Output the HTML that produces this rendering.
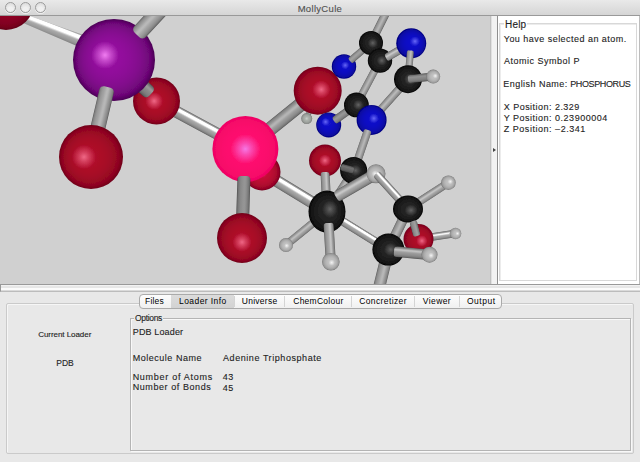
<!DOCTYPE html>
<html><head><meta charset="utf-8">
<style>
*{margin:0;padding:0;box-sizing:border-box}
html,body{width:640px;height:462px;overflow:hidden;background:#e8e8e8;font-family:"Liberation Sans",sans-serif;color:#1a1a1a}
.a{position:absolute;white-space:nowrap;-webkit-text-stroke:0.12px currentColor}
#title{position:absolute;left:0;top:0;width:640px;height:15px;background:linear-gradient(#e9e9e9,#d5d5d5);}
#tline{position:absolute;left:0;top:15px;width:640px;height:1px;background:#999}
.btn{position:absolute;top:2px;width:11px;height:11px;border-radius:50%;border:1.3px solid #9c9c9c;background:radial-gradient(circle at 50% 75%,#f0f0f0 30%,#d6d6d6);box-shadow:0 1px 0 rgba(255,255,255,0.6)}
#view{position:absolute;left:0;top:16px;width:490px;height:268px;background:#d0d0d0;overflow:hidden}
#vdiv{position:absolute;left:490px;top:16px;width:8px;height:268px;border-left:1px solid #c0c0c0;border-right:1px solid #8e8e8e;background:linear-gradient(to right,#e0e0e0 0,#e0e0e0 1px,#f2f2f2 1px)}
#rpanel{position:absolute;left:498px;top:16px;width:142px;height:268px;background:#fff;border-right:1px solid #bdbdbd}
#hdiv{position:absolute;left:0;top:284px;width:640px;height:8px;border-top:1px solid #999;border-bottom:1px solid #bcbcbc;border-left:1px solid #999;background:linear-gradient(#f2f2f2 0,#f2f2f2 1px,#e6e6e6 1px,#e6e6e6 3px,#fbfbfb 3px,#fbfbfb 5px,#dadada 5px)}
#tabpanel{position:absolute;left:6px;top:303px;width:628px;height:151px;border:1px solid #cacaca;border-radius:2px;background:#e8e8e8;box-shadow:1px 1px 0 #f6f6f6 inset}
#tabs{position:absolute;left:139px;top:294px;width:363px;height:15px;border:1px solid #aaaaaa;border-radius:4px;background:linear-gradient(#fdfdfd,#f0f0f0);overflow:hidden}
.tab{position:absolute;top:0;height:13px;font-size:9px;line-height:13px;color:#111}
.tsep{position:absolute;top:0;width:1px;height:11px;margin-top:1px;background:#d4d4d4}
</style></head><body>
<div id="title"></div>
<div id="tline"></div>
<div class="btn" style="left:5px"></div>
<div class="btn" style="left:20px"></div>
<div class="btn" style="left:35px"></div>

<div id="view">
<svg width="490" height="268" viewBox="0 16 490 268">

<filter id="soft" x="-5%" y="-5%" width="110%" height="110%"><feGaussianBlur stdDeviation="0.45"/></filter>
<g filter="url(#soft)">
<rect x="0" y="16" width="490" height="268" fill="#d0d0d0"/>
<linearGradient id="gb1" x1="0" y1="0" x2="0" y2="1"><stop offset="0.0" stop-color="#5b5b5b"/><stop offset="0.062" stop-color="#838383"/><stop offset="0.125" stop-color="#a8a8a8"/><stop offset="0.188" stop-color="#fdfdfd"/><stop offset="0.25" stop-color="#ffffff"/><stop offset="0.312" stop-color="#ffffff"/><stop offset="0.375" stop-color="#ffffff"/><stop offset="0.438" stop-color="#dddddd"/><stop offset="0.5" stop-color="#b6b6b6"/><stop offset="0.562" stop-color="#a7a7a7"/><stop offset="0.625" stop-color="#a2a2a2"/><stop offset="0.688" stop-color="#9d9d9d"/><stop offset="0.75" stop-color="#979797"/><stop offset="0.812" stop-color="#8f8f8f"/><stop offset="0.875" stop-color="#848484"/><stop offset="0.938" stop-color="#757575"/><stop offset="1.0" stop-color="#535353"/></linearGradient>
<radialGradient id="gh_Od2" cx="50%" cy="50%" r="50%"><stop offset="0" stop-color="#be3250" stop-opacity="0.3"/><stop offset="0.4" stop-color="#be3250" stop-opacity="0.165"/><stop offset="1" stop-color="#be3250" stop-opacity="0"/></radialGradient>
<radialGradient id="gm_Od2_0_0" cx="50%" cy="50%" r="50%" fx="50%" fy="50%"><stop offset="0.0" stop-color="#960626"/><stop offset="0.1" stop-color="#960626"/><stop offset="0.2" stop-color="#950626"/><stop offset="0.3" stop-color="#930625"/><stop offset="0.4" stop-color="#910525"/><stop offset="0.5" stop-color="#8f0524"/><stop offset="0.6" stop-color="#8b0523"/><stop offset="0.7" stop-color="#860421"/><stop offset="0.8" stop-color="#800420"/><stop offset="0.9" stop-color="#77031d"/><stop offset="1.0" stop-color="#5f0016"/></radialGradient>
<linearGradient id="gb2" x1="0" y1="0" x2="0" y2="1"><stop offset="0.0" stop-color="#5b5b5b"/><stop offset="0.062" stop-color="#838383"/><stop offset="0.125" stop-color="#a9a9a9"/><stop offset="0.188" stop-color="#ffffff"/><stop offset="0.25" stop-color="#ffffff"/><stop offset="0.312" stop-color="#ffffff"/><stop offset="0.375" stop-color="#ffffff"/><stop offset="0.438" stop-color="#dedede"/><stop offset="0.5" stop-color="#b6b6b6"/><stop offset="0.562" stop-color="#a7a7a7"/><stop offset="0.625" stop-color="#a2a2a2"/><stop offset="0.688" stop-color="#9d9d9d"/><stop offset="0.75" stop-color="#979797"/><stop offset="0.812" stop-color="#8f8f8f"/><stop offset="0.875" stop-color="#858585"/><stop offset="0.938" stop-color="#757575"/><stop offset="1.0" stop-color="#535353"/></linearGradient>
<radialGradient id="gh_O" cx="50%" cy="50%" r="50%"><stop offset="0" stop-color="#fa7896" stop-opacity="0.85"/><stop offset="0.4" stop-color="#fa7896" stop-opacity="0.468"/><stop offset="1" stop-color="#fa7896" stop-opacity="0"/></radialGradient>
<radialGradient id="gm_O_m10_0" cx="50%" cy="50%" r="50%" fx="46%" fy="50%"><stop offset="0.0" stop-color="#b20c2a"/><stop offset="0.1" stop-color="#b20c2a"/><stop offset="0.2" stop-color="#b10c2a"/><stop offset="0.3" stop-color="#af0b29"/><stop offset="0.4" stop-color="#ac0b28"/><stop offset="0.5" stop-color="#a90a28"/><stop offset="0.6" stop-color="#a50a26"/><stop offset="0.7" stop-color="#9f0925"/><stop offset="0.8" stop-color="#980723"/><stop offset="0.9" stop-color="#8d0520"/><stop offset="1.0" stop-color="#700018"/></radialGradient>
<linearGradient id="gb3" x1="0" y1="0" x2="0" y2="1"><stop offset="0.0" stop-color="#484848"/><stop offset="0.062" stop-color="#686868"/><stop offset="0.125" stop-color="#767676"/><stop offset="0.188" stop-color="#858585"/><stop offset="0.25" stop-color="#949494"/><stop offset="0.312" stop-color="#999999"/><stop offset="0.375" stop-color="#949494"/><stop offset="0.438" stop-color="#8d8d8d"/><stop offset="0.5" stop-color="#898989"/><stop offset="0.562" stop-color="#868686"/><stop offset="0.625" stop-color="#838383"/><stop offset="0.688" stop-color="#808080"/><stop offset="0.75" stop-color="#7b7b7b"/><stop offset="0.812" stop-color="#757575"/><stop offset="0.875" stop-color="#6c6c6c"/><stop offset="0.938" stop-color="#606060"/><stop offset="1.0" stop-color="#444444"/></linearGradient>
<radialGradient id="gh_Pu" cx="50%" cy="50%" r="50%"><stop offset="0" stop-color="#f582f5" stop-opacity="0.95"/><stop offset="0.4" stop-color="#f582f5" stop-opacity="0.522"/><stop offset="1" stop-color="#f582f5" stop-opacity="0"/></radialGradient>
<radialGradient id="gm_Pu_m22_m12" cx="50%" cy="50%" r="50%" fx="41%" fy="45%"><stop offset="0.0" stop-color="#960ea0"/><stop offset="0.1" stop-color="#960ea0"/><stop offset="0.2" stop-color="#940e9e"/><stop offset="0.3" stop-color="#930d9d"/><stop offset="0.4" stop-color="#900d9a"/><stop offset="0.5" stop-color="#8c0c96"/><stop offset="0.6" stop-color="#870b91"/><stop offset="0.7" stop-color="#810a8b"/><stop offset="0.8" stop-color="#780882"/><stop offset="0.9" stop-color="#6c0676"/><stop offset="1.0" stop-color="#4b0055"/></radialGradient>
<linearGradient id="gb4" x1="0" y1="0" x2="0" y2="1"><stop offset="0.0" stop-color="#595959"/><stop offset="0.062" stop-color="#808080"/><stop offset="0.125" stop-color="#8e8e8e"/><stop offset="0.188" stop-color="#989898"/><stop offset="0.25" stop-color="#a0a0a0"/><stop offset="0.312" stop-color="#aaaaaa"/><stop offset="0.375" stop-color="#b4b4b4"/><stop offset="0.438" stop-color="#b9b9b9"/><stop offset="0.5" stop-color="#b6b6b6"/><stop offset="0.562" stop-color="#adadad"/><stop offset="0.625" stop-color="#a5a5a5"/><stop offset="0.688" stop-color="#9f9f9f"/><stop offset="0.75" stop-color="#989898"/><stop offset="0.812" stop-color="#909090"/><stop offset="0.875" stop-color="#868686"/><stop offset="0.938" stop-color="#767676"/><stop offset="1.0" stop-color="#535353"/></linearGradient>
<linearGradient id="gb5" x1="0" y1="0" x2="0" y2="1"><stop offset="0.0" stop-color="#535353"/><stop offset="0.062" stop-color="#7a7a7a"/><stop offset="0.125" stop-color="#898989"/><stop offset="0.188" stop-color="#939393"/><stop offset="0.25" stop-color="#9c9c9c"/><stop offset="0.312" stop-color="#a7a7a7"/><stop offset="0.375" stop-color="#b2b2b2"/><stop offset="0.438" stop-color="#b8b8b8"/><stop offset="0.5" stop-color="#b6b6b6"/><stop offset="0.562" stop-color="#afafaf"/><stop offset="0.625" stop-color="#a7a7a7"/><stop offset="0.688" stop-color="#a1a1a1"/><stop offset="0.75" stop-color="#9c9c9c"/><stop offset="0.812" stop-color="#959595"/><stop offset="0.875" stop-color="#8b8b8b"/><stop offset="0.938" stop-color="#7d7d7d"/><stop offset="1.0" stop-color="#555555"/></linearGradient>
<radialGradient id="gm_O_m22_0" cx="50%" cy="50%" r="50%" fx="41%" fy="50%"><stop offset="0.0" stop-color="#b20c2a"/><stop offset="0.1" stop-color="#b20c2a"/><stop offset="0.2" stop-color="#b10c2a"/><stop offset="0.3" stop-color="#af0b29"/><stop offset="0.4" stop-color="#ac0b28"/><stop offset="0.5" stop-color="#a90a28"/><stop offset="0.6" stop-color="#a50a26"/><stop offset="0.7" stop-color="#9f0925"/><stop offset="0.8" stop-color="#980723"/><stop offset="0.9" stop-color="#8d0520"/><stop offset="1.0" stop-color="#700018"/></radialGradient>
<linearGradient id="gb6" x1="0" y1="0" x2="0" y2="1"><stop offset="0.0" stop-color="#555555"/><stop offset="0.062" stop-color="#7a7a7a"/><stop offset="0.125" stop-color="#878787"/><stop offset="0.188" stop-color="#919191"/><stop offset="0.25" stop-color="#9b9b9b"/><stop offset="0.312" stop-color="#a9a9a9"/><stop offset="0.375" stop-color="#b3b3b3"/><stop offset="0.438" stop-color="#b5b5b5"/><stop offset="0.5" stop-color="#adadad"/><stop offset="0.562" stop-color="#a3a3a3"/><stop offset="0.625" stop-color="#9b9b9b"/><stop offset="0.688" stop-color="#959595"/><stop offset="0.75" stop-color="#909090"/><stop offset="0.812" stop-color="#888888"/><stop offset="0.875" stop-color="#7e7e7e"/><stop offset="0.938" stop-color="#6f6f6f"/><stop offset="1.0" stop-color="#4f4f4f"/></linearGradient>
<linearGradient id="gb7" x1="0" y1="0" x2="0" y2="1"><stop offset="0.0" stop-color="#5a5a5a"/><stop offset="0.062" stop-color="#838383"/><stop offset="0.125" stop-color="#a8a8a8"/><stop offset="0.188" stop-color="#ffffff"/><stop offset="0.25" stop-color="#ffffff"/><stop offset="0.312" stop-color="#ffffff"/><stop offset="0.375" stop-color="#ffffff"/><stop offset="0.438" stop-color="#dedede"/><stop offset="0.5" stop-color="#b6b6b6"/><stop offset="0.562" stop-color="#a7a7a7"/><stop offset="0.625" stop-color="#a2a2a2"/><stop offset="0.688" stop-color="#9d9d9d"/><stop offset="0.75" stop-color="#979797"/><stop offset="0.812" stop-color="#8f8f8f"/><stop offset="0.875" stop-color="#858585"/><stop offset="0.938" stop-color="#757575"/><stop offset="1.0" stop-color="#535353"/></linearGradient>
<radialGradient id="gh_Od" cx="50%" cy="50%" r="50%"><stop offset="0" stop-color="#eb5f7d" stop-opacity="0.5"/><stop offset="0.4" stop-color="#eb5f7d" stop-opacity="0.275"/><stop offset="1" stop-color="#eb5f7d" stop-opacity="0"/></radialGradient>
<radialGradient id="gm_Od_0_0" cx="50%" cy="50%" r="50%" fx="50%" fy="50%"><stop offset="0.0" stop-color="#c80c37"/><stop offset="0.1" stop-color="#c80c37"/><stop offset="0.2" stop-color="#c60c36"/><stop offset="0.3" stop-color="#c40b36"/><stop offset="0.4" stop-color="#c10b35"/><stop offset="0.5" stop-color="#bd0a33"/><stop offset="0.6" stop-color="#b70a32"/><stop offset="0.7" stop-color="#b0092f"/><stop offset="0.8" stop-color="#a6072c"/><stop offset="0.9" stop-color="#980528"/><stop offset="1.0" stop-color="#73001c"/></radialGradient>
<radialGradient id="gh_P" cx="50%" cy="50%" r="50%"><stop offset="0" stop-color="#f57deb" stop-opacity="0.95"/><stop offset="0.4" stop-color="#f57deb" stop-opacity="0.522"/><stop offset="1" stop-color="#f57deb" stop-opacity="0"/></radialGradient>
<radialGradient id="gm_P_0_0" cx="50%" cy="50%" r="50%" fx="50%" fy="50%"><stop offset="0.0" stop-color="#ff1070"/><stop offset="0.1" stop-color="#ff1070"/><stop offset="0.2" stop-color="#ff1070"/><stop offset="0.3" stop-color="#fe0f6f"/><stop offset="0.4" stop-color="#fe0f6f"/><stop offset="0.5" stop-color="#fd0e6e"/><stop offset="0.6" stop-color="#fc0d6d"/><stop offset="0.7" stop-color="#fa0b6c"/><stop offset="0.8" stop-color="#f80a6a"/><stop offset="0.9" stop-color="#f50768"/><stop offset="1.0" stop-color="#ee0062"/></radialGradient>
<linearGradient id="gb8" x1="0" y1="0" x2="0" y2="1"><stop offset="0.0" stop-color="#484848"/><stop offset="0.062" stop-color="#6a6a6a"/><stop offset="0.125" stop-color="#777777"/><stop offset="0.188" stop-color="#808080"/><stop offset="0.25" stop-color="#888888"/><stop offset="0.312" stop-color="#8f8f8f"/><stop offset="0.375" stop-color="#949494"/><stop offset="0.438" stop-color="#959595"/><stop offset="0.5" stop-color="#949494"/><stop offset="0.562" stop-color="#919191"/><stop offset="0.625" stop-color="#8e8e8e"/><stop offset="0.688" stop-color="#8b8b8b"/><stop offset="0.75" stop-color="#868686"/><stop offset="0.812" stop-color="#808080"/><stop offset="0.875" stop-color="#787878"/><stop offset="0.938" stop-color="#6b6b6b"/><stop offset="1.0" stop-color="#484848"/></linearGradient>
<radialGradient id="gm_O_0_17" cx="50%" cy="50%" r="50%" fx="50%" fy="57%"><stop offset="0.0" stop-color="#b20c2a"/><stop offset="0.1" stop-color="#b20c2a"/><stop offset="0.2" stop-color="#b10c2a"/><stop offset="0.3" stop-color="#af0b29"/><stop offset="0.4" stop-color="#ac0b28"/><stop offset="0.5" stop-color="#a90a28"/><stop offset="0.6" stop-color="#a50a26"/><stop offset="0.7" stop-color="#9f0925"/><stop offset="0.8" stop-color="#980723"/><stop offset="0.9" stop-color="#8d0520"/><stop offset="1.0" stop-color="#700018"/></radialGradient>
<linearGradient id="gb9" x1="0" y1="0" x2="0" y2="1"><stop offset="0.0" stop-color="#535353"/><stop offset="0.062" stop-color="#797979"/><stop offset="0.125" stop-color="#888888"/><stop offset="0.188" stop-color="#929292"/><stop offset="0.25" stop-color="#9a9a9a"/><stop offset="0.312" stop-color="#a3a3a3"/><stop offset="0.375" stop-color="#acacac"/><stop offset="0.438" stop-color="#b4b4b4"/><stop offset="0.5" stop-color="#b6b6b6"/><stop offset="0.562" stop-color="#b1b1b1"/><stop offset="0.625" stop-color="#a9a9a9"/><stop offset="0.688" stop-color="#a3a3a3"/><stop offset="0.75" stop-color="#9d9d9d"/><stop offset="0.812" stop-color="#969696"/><stop offset="0.875" stop-color="#8c8c8c"/><stop offset="0.938" stop-color="#7e7e7e"/><stop offset="1.0" stop-color="#565656"/></linearGradient>
<radialGradient id="gh_Hd" cx="50%" cy="50%" r="50%"><stop offset="0" stop-color="#dce1dc" stop-opacity="0.6"/><stop offset="0.4" stop-color="#dce1dc" stop-opacity="0.330"/><stop offset="1" stop-color="#dce1dc" stop-opacity="0"/></radialGradient>
<radialGradient id="gm_Hd_0_0" cx="50%" cy="50%" r="50%" fx="50%" fy="50%"><stop offset="0.0" stop-color="#afb4af"/><stop offset="0.1" stop-color="#afb4af"/><stop offset="0.2" stop-color="#aeb3ae"/><stop offset="0.3" stop-color="#acb1ac"/><stop offset="0.4" stop-color="#a9aea9"/><stop offset="0.5" stop-color="#a6aaa6"/><stop offset="0.6" stop-color="#a1a6a1"/><stop offset="0.7" stop-color="#9b9f9b"/><stop offset="0.8" stop-color="#939793"/><stop offset="0.9" stop-color="#888b88"/><stop offset="1.0" stop-color="#696c69"/></radialGradient>
<radialGradient id="gm_O_15_m5" cx="50%" cy="50%" r="50%" fx="56%" fy="48%"><stop offset="0.0" stop-color="#b20c2a"/><stop offset="0.1" stop-color="#b20c2a"/><stop offset="0.2" stop-color="#b10c2a"/><stop offset="0.3" stop-color="#af0b29"/><stop offset="0.4" stop-color="#ac0b28"/><stop offset="0.5" stop-color="#a90a28"/><stop offset="0.6" stop-color="#a50a26"/><stop offset="0.7" stop-color="#9f0925"/><stop offset="0.8" stop-color="#980723"/><stop offset="0.9" stop-color="#8d0520"/><stop offset="1.0" stop-color="#700018"/></radialGradient>
<linearGradient id="gb10" x1="0" y1="0" x2="0" y2="1"><stop offset="0.0" stop-color="#575757"/><stop offset="0.062" stop-color="#7f7f7f"/><stop offset="0.125" stop-color="#8d8d8d"/><stop offset="0.188" stop-color="#969696"/><stop offset="0.25" stop-color="#9d9d9d"/><stop offset="0.312" stop-color="#a4a4a4"/><stop offset="0.375" stop-color="#ababab"/><stop offset="0.438" stop-color="#b2b2b2"/><stop offset="0.5" stop-color="#b6b6b6"/><stop offset="0.562" stop-color="#b2b2b2"/><stop offset="0.625" stop-color="#aaaaaa"/><stop offset="0.688" stop-color="#a1a1a1"/><stop offset="0.75" stop-color="#9a9a9a"/><stop offset="0.812" stop-color="#929292"/><stop offset="0.875" stop-color="#878787"/><stop offset="0.938" stop-color="#787878"/><stop offset="1.0" stop-color="#535353"/></linearGradient>
<radialGradient id="gh_N" cx="50%" cy="50%" r="50%"><stop offset="0" stop-color="#7878ff" stop-opacity="0.85"/><stop offset="0.4" stop-color="#7878ff" stop-opacity="0.468"/><stop offset="1" stop-color="#7878ff" stop-opacity="0"/></radialGradient>
<radialGradient id="gm_N_10_m10" cx="50%" cy="50%" r="50%" fx="54%" fy="46%"><stop offset="0.0" stop-color="#1212cd"/><stop offset="0.1" stop-color="#1212cd"/><stop offset="0.2" stop-color="#1212cb"/><stop offset="0.3" stop-color="#1111c9"/><stop offset="0.4" stop-color="#1010c6"/><stop offset="0.5" stop-color="#1010c2"/><stop offset="0.6" stop-color="#0e0ebc"/><stop offset="0.7" stop-color="#0d0db5"/><stop offset="0.8" stop-color="#0b0bab"/><stop offset="0.9" stop-color="#08089d"/><stop offset="1.0" stop-color="#000078"/></radialGradient>
<linearGradient id="gb11" x1="0" y1="0" x2="0" y2="1"><stop offset="0.0" stop-color="#525252"/><stop offset="0.062" stop-color="#767676"/><stop offset="0.125" stop-color="#838383"/><stop offset="0.188" stop-color="#8c8c8c"/><stop offset="0.25" stop-color="#939393"/><stop offset="0.312" stop-color="#999999"/><stop offset="0.375" stop-color="#9e9e9e"/><stop offset="0.438" stop-color="#a0a0a0"/><stop offset="0.5" stop-color="#9e9e9e"/><stop offset="0.562" stop-color="#9a9a9a"/><stop offset="0.625" stop-color="#959595"/><stop offset="0.688" stop-color="#919191"/><stop offset="0.75" stop-color="#8c8c8c"/><stop offset="0.812" stop-color="#848484"/><stop offset="0.875" stop-color="#7b7b7b"/><stop offset="0.938" stop-color="#6c6c6c"/><stop offset="1.0" stop-color="#4c4c4c"/></linearGradient>
<radialGradient id="gh_C" cx="50%" cy="50%" r="50%"><stop offset="0" stop-color="#737373" stop-opacity="0.8"/><stop offset="0.4" stop-color="#737373" stop-opacity="0.440"/><stop offset="1" stop-color="#737373" stop-opacity="0"/></radialGradient>
<radialGradient id="gm_C_15_0" cx="50%" cy="50%" r="50%" fx="56%" fy="50%"><stop offset="0.0" stop-color="#262626"/><stop offset="0.1" stop-color="#262626"/><stop offset="0.2" stop-color="#252525"/><stop offset="0.3" stop-color="#242424"/><stop offset="0.4" stop-color="#232323"/><stop offset="0.5" stop-color="#212121"/><stop offset="0.6" stop-color="#1e1e1e"/><stop offset="0.7" stop-color="#1b1b1b"/><stop offset="0.8" stop-color="#171717"/><stop offset="0.9" stop-color="#111111"/><stop offset="1.0" stop-color="#000000"/></radialGradient>
<linearGradient id="gb12" x1="0" y1="0" x2="0" y2="1"><stop offset="0.0" stop-color="#535353"/><stop offset="0.062" stop-color="#787878"/><stop offset="0.125" stop-color="#878787"/><stop offset="0.188" stop-color="#929292"/><stop offset="0.25" stop-color="#999999"/><stop offset="0.312" stop-color="#a1a1a1"/><stop offset="0.375" stop-color="#a9a9a9"/><stop offset="0.438" stop-color="#b2b2b2"/><stop offset="0.5" stop-color="#b6b6b6"/><stop offset="0.562" stop-color="#b3b3b3"/><stop offset="0.625" stop-color="#acacac"/><stop offset="0.688" stop-color="#a4a4a4"/><stop offset="0.75" stop-color="#9d9d9d"/><stop offset="0.812" stop-color="#969696"/><stop offset="0.875" stop-color="#8d8d8d"/><stop offset="0.938" stop-color="#7f7f7f"/><stop offset="1.0" stop-color="#575757"/></linearGradient>
<linearGradient id="gb13" x1="0" y1="0" x2="0" y2="1"><stop offset="0.0" stop-color="#5a5a5a"/><stop offset="0.062" stop-color="#828282"/><stop offset="0.125" stop-color="#909090"/><stop offset="0.188" stop-color="#9c9c9c"/><stop offset="0.25" stop-color="#acacac"/><stop offset="0.312" stop-color="#bebebe"/><stop offset="0.375" stop-color="#c7c7c7"/><stop offset="0.438" stop-color="#c3c3c3"/><stop offset="0.5" stop-color="#b6b6b6"/><stop offset="0.562" stop-color="#aaaaaa"/><stop offset="0.625" stop-color="#a3a3a3"/><stop offset="0.688" stop-color="#9e9e9e"/><stop offset="0.75" stop-color="#979797"/><stop offset="0.812" stop-color="#8f8f8f"/><stop offset="0.875" stop-color="#858585"/><stop offset="0.938" stop-color="#757575"/><stop offset="1.0" stop-color="#535353"/></linearGradient>
<radialGradient id="gm_N_25_m13" cx="50%" cy="50%" r="50%" fx="60%" fy="45%"><stop offset="0.0" stop-color="#1212cd"/><stop offset="0.1" stop-color="#1212cd"/><stop offset="0.2" stop-color="#1212cb"/><stop offset="0.3" stop-color="#1111c9"/><stop offset="0.4" stop-color="#1010c6"/><stop offset="0.5" stop-color="#1010c2"/><stop offset="0.6" stop-color="#0e0ebc"/><stop offset="0.7" stop-color="#0d0db5"/><stop offset="0.8" stop-color="#0b0bab"/><stop offset="0.9" stop-color="#08089d"/><stop offset="1.0" stop-color="#000078"/></radialGradient>
<linearGradient id="gb14" x1="0" y1="0" x2="0" y2="1"><stop offset="0.0" stop-color="#535353"/><stop offset="0.062" stop-color="#777777"/><stop offset="0.125" stop-color="#868686"/><stop offset="0.188" stop-color="#909090"/><stop offset="0.25" stop-color="#989898"/><stop offset="0.312" stop-color="#9f9f9f"/><stop offset="0.375" stop-color="#a5a5a5"/><stop offset="0.438" stop-color="#aeaeae"/><stop offset="0.5" stop-color="#b6b6b6"/><stop offset="0.562" stop-color="#b9b9b9"/><stop offset="0.625" stop-color="#b3b3b3"/><stop offset="0.688" stop-color="#aaaaaa"/><stop offset="0.75" stop-color="#a0a0a0"/><stop offset="0.812" stop-color="#989898"/><stop offset="0.875" stop-color="#8e8e8e"/><stop offset="0.938" stop-color="#808080"/><stop offset="1.0" stop-color="#595959"/></linearGradient>
<linearGradient id="gb15" x1="0" y1="0" x2="0" y2="1"><stop offset="0.0" stop-color="#535353"/><stop offset="0.062" stop-color="#7b7b7b"/><stop offset="0.125" stop-color="#8a8a8a"/><stop offset="0.188" stop-color="#949494"/><stop offset="0.25" stop-color="#a0a0a0"/><stop offset="0.312" stop-color="#aeaeae"/><stop offset="0.375" stop-color="#bababa"/><stop offset="0.438" stop-color="#bcbcbc"/><stop offset="0.5" stop-color="#b6b6b6"/><stop offset="0.562" stop-color="#adadad"/><stop offset="0.625" stop-color="#a6a6a6"/><stop offset="0.688" stop-color="#a1a1a1"/><stop offset="0.75" stop-color="#9b9b9b"/><stop offset="0.812" stop-color="#949494"/><stop offset="0.875" stop-color="#8b8b8b"/><stop offset="0.938" stop-color="#7c7c7c"/><stop offset="1.0" stop-color="#545454"/></linearGradient>
<linearGradient id="gb16" x1="0" y1="0" x2="0" y2="1"><stop offset="0.0" stop-color="#4a4a4a"/><stop offset="0.062" stop-color="#6a6a6a"/><stop offset="0.125" stop-color="#767676"/><stop offset="0.188" stop-color="#808080"/><stop offset="0.25" stop-color="#8a8a8a"/><stop offset="0.312" stop-color="#919191"/><stop offset="0.375" stop-color="#909090"/><stop offset="0.438" stop-color="#8c8c8c"/><stop offset="0.5" stop-color="#898989"/><stop offset="0.562" stop-color="#868686"/><stop offset="0.625" stop-color="#838383"/><stop offset="0.688" stop-color="#7f7f7f"/><stop offset="0.75" stop-color="#7a7a7a"/><stop offset="0.812" stop-color="#747474"/><stop offset="0.875" stop-color="#6b6b6b"/><stop offset="0.938" stop-color="#5e5e5e"/><stop offset="1.0" stop-color="#444444"/></linearGradient>
<radialGradient id="gh_H" cx="50%" cy="50%" r="50%"><stop offset="0" stop-color="#fafafa" stop-opacity="0.9"/><stop offset="0.4" stop-color="#fafafa" stop-opacity="0.495"/><stop offset="1" stop-color="#fafafa" stop-opacity="0"/></radialGradient>
<radialGradient id="gm_H_30_m10" cx="50%" cy="50%" r="50%" fx="62%" fy="46%"><stop offset="0.0" stop-color="#c4c4c4"/><stop offset="0.1" stop-color="#c4c4c4"/><stop offset="0.2" stop-color="#c2c2c2"/><stop offset="0.3" stop-color="#c0c0c0"/><stop offset="0.4" stop-color="#bdbdbd"/><stop offset="0.5" stop-color="#b9b9b9"/><stop offset="0.6" stop-color="#b3b3b3"/><stop offset="0.7" stop-color="#acacac"/><stop offset="0.8" stop-color="#a2a2a2"/><stop offset="0.9" stop-color="#959595"/><stop offset="1.0" stop-color="#707070"/></radialGradient>
<radialGradient id="gm_N_m25_m25" cx="50%" cy="50%" r="50%" fx="40%" fy="40%"><stop offset="0.0" stop-color="#1212cd"/><stop offset="0.1" stop-color="#1212cd"/><stop offset="0.2" stop-color="#1212cb"/><stop offset="0.3" stop-color="#1111c9"/><stop offset="0.4" stop-color="#1010c6"/><stop offset="0.5" stop-color="#1010c2"/><stop offset="0.6" stop-color="#0e0ebc"/><stop offset="0.7" stop-color="#0d0db5"/><stop offset="0.8" stop-color="#0b0bab"/><stop offset="0.9" stop-color="#08089d"/><stop offset="1.0" stop-color="#000078"/></radialGradient>
<linearGradient id="gb17" x1="0" y1="0" x2="0" y2="1"><stop offset="0.0" stop-color="#484848"/><stop offset="0.062" stop-color="#666666"/><stop offset="0.125" stop-color="#737373"/><stop offset="0.188" stop-color="#7c7c7c"/><stop offset="0.25" stop-color="#838383"/><stop offset="0.312" stop-color="#888888"/><stop offset="0.375" stop-color="#8c8c8c"/><stop offset="0.438" stop-color="#909090"/><stop offset="0.5" stop-color="#949494"/><stop offset="0.562" stop-color="#969696"/><stop offset="0.625" stop-color="#969696"/><stop offset="0.688" stop-color="#919191"/><stop offset="0.75" stop-color="#8b8b8b"/><stop offset="0.812" stop-color="#848484"/><stop offset="0.875" stop-color="#7c7c7c"/><stop offset="0.938" stop-color="#707070"/><stop offset="1.0" stop-color="#4e4e4e"/></linearGradient>
<linearGradient id="gb18" x1="0" y1="0" x2="0" y2="1"><stop offset="0.0" stop-color="#595959"/><stop offset="0.062" stop-color="#818181"/><stop offset="0.125" stop-color="#a0a0a0"/><stop offset="0.188" stop-color="#e5e5e5"/><stop offset="0.25" stop-color="#ffffff"/><stop offset="0.312" stop-color="#ffffff"/><stop offset="0.375" stop-color="#ffffff"/><stop offset="0.438" stop-color="#dadada"/><stop offset="0.5" stop-color="#b6b6b6"/><stop offset="0.562" stop-color="#a8a8a8"/><stop offset="0.625" stop-color="#a2a2a2"/><stop offset="0.688" stop-color="#9e9e9e"/><stop offset="0.75" stop-color="#989898"/><stop offset="0.812" stop-color="#909090"/><stop offset="0.875" stop-color="#868686"/><stop offset="0.938" stop-color="#767676"/><stop offset="1.0" stop-color="#535353"/></linearGradient>
<radialGradient id="gm_N_15_m10" cx="50%" cy="50%" r="50%" fx="56%" fy="46%"><stop offset="0.0" stop-color="#1212cd"/><stop offset="0.1" stop-color="#1212cd"/><stop offset="0.2" stop-color="#1212cb"/><stop offset="0.3" stop-color="#1111c9"/><stop offset="0.4" stop-color="#1010c6"/><stop offset="0.5" stop-color="#1010c2"/><stop offset="0.6" stop-color="#0e0ebc"/><stop offset="0.7" stop-color="#0d0db5"/><stop offset="0.8" stop-color="#0b0bab"/><stop offset="0.9" stop-color="#08089d"/><stop offset="1.0" stop-color="#000078"/></radialGradient>
<linearGradient id="gb19" x1="0" y1="0" x2="0" y2="1"><stop offset="0.0" stop-color="#535353"/><stop offset="0.062" stop-color="#797979"/><stop offset="0.125" stop-color="#888888"/><stop offset="0.188" stop-color="#929292"/><stop offset="0.25" stop-color="#9b9b9b"/><stop offset="0.312" stop-color="#a4a4a4"/><stop offset="0.375" stop-color="#aeaeae"/><stop offset="0.438" stop-color="#b5b5b5"/><stop offset="0.5" stop-color="#b6b6b6"/><stop offset="0.562" stop-color="#b0b0b0"/><stop offset="0.625" stop-color="#a8a8a8"/><stop offset="0.688" stop-color="#a2a2a2"/><stop offset="0.75" stop-color="#9c9c9c"/><stop offset="0.812" stop-color="#969696"/><stop offset="0.875" stop-color="#8c8c8c"/><stop offset="0.938" stop-color="#7e7e7e"/><stop offset="1.0" stop-color="#565656"/></linearGradient>
<linearGradient id="gb20" x1="0" y1="0" x2="0" y2="1"><stop offset="0.0" stop-color="#585858"/><stop offset="0.062" stop-color="#7f7f7f"/><stop offset="0.125" stop-color="#8d8d8d"/><stop offset="0.188" stop-color="#979797"/><stop offset="0.25" stop-color="#9e9e9e"/><stop offset="0.312" stop-color="#a5a5a5"/><stop offset="0.375" stop-color="#aeaeae"/><stop offset="0.438" stop-color="#b5b5b5"/><stop offset="0.5" stop-color="#b6b6b6"/><stop offset="0.562" stop-color="#b0b0b0"/><stop offset="0.625" stop-color="#a8a8a8"/><stop offset="0.688" stop-color="#a0a0a0"/><stop offset="0.75" stop-color="#999999"/><stop offset="0.812" stop-color="#919191"/><stop offset="0.875" stop-color="#878787"/><stop offset="0.938" stop-color="#777777"/><stop offset="1.0" stop-color="#535353"/></linearGradient>
<linearGradient id="gb21" x1="0" y1="0" x2="0" y2="1"><stop offset="0.0" stop-color="#343434"/><stop offset="0.062" stop-color="#484848"/><stop offset="0.125" stop-color="#525252"/><stop offset="0.188" stop-color="#595959"/><stop offset="0.25" stop-color="#5e5e5e"/><stop offset="0.312" stop-color="#626262"/><stop offset="0.375" stop-color="#646464"/><stop offset="0.438" stop-color="#666666"/><stop offset="0.5" stop-color="#686868"/><stop offset="0.562" stop-color="#6b6b6b"/><stop offset="0.625" stop-color="#6e6e6e"/><stop offset="0.688" stop-color="#707070"/><stop offset="0.75" stop-color="#6d6d6d"/><stop offset="0.812" stop-color="#656565"/><stop offset="0.875" stop-color="#5b5b5b"/><stop offset="0.938" stop-color="#515151"/><stop offset="1.0" stop-color="#393939"/></linearGradient>
<radialGradient id="gm_O_0_0" cx="50%" cy="50%" r="50%" fx="50%" fy="50%"><stop offset="0.0" stop-color="#b20c2a"/><stop offset="0.1" stop-color="#b20c2a"/><stop offset="0.2" stop-color="#b10c2a"/><stop offset="0.3" stop-color="#af0b29"/><stop offset="0.4" stop-color="#ac0b28"/><stop offset="0.5" stop-color="#a90a28"/><stop offset="0.6" stop-color="#a50a26"/><stop offset="0.7" stop-color="#9f0925"/><stop offset="0.8" stop-color="#980723"/><stop offset="0.9" stop-color="#8d0520"/><stop offset="1.0" stop-color="#700018"/></radialGradient>
<linearGradient id="gb22" x1="0" y1="0" x2="0" y2="1"><stop offset="0.0" stop-color="#545454"/><stop offset="0.062" stop-color="#7c7c7c"/><stop offset="0.125" stop-color="#8b8b8b"/><stop offset="0.188" stop-color="#979797"/><stop offset="0.25" stop-color="#a7a7a7"/><stop offset="0.312" stop-color="#b9b9b9"/><stop offset="0.375" stop-color="#c4c4c4"/><stop offset="0.438" stop-color="#c1c1c1"/><stop offset="0.5" stop-color="#b6b6b6"/><stop offset="0.562" stop-color="#ababab"/><stop offset="0.625" stop-color="#a5a5a5"/><stop offset="0.688" stop-color="#a0a0a0"/><stop offset="0.75" stop-color="#9b9b9b"/><stop offset="0.812" stop-color="#949494"/><stop offset="0.875" stop-color="#8a8a8a"/><stop offset="0.938" stop-color="#7b7b7b"/><stop offset="1.0" stop-color="#535353"/></linearGradient>
<linearGradient id="gb23" x1="0" y1="0" x2="0" y2="1"><stop offset="0.0" stop-color="#535353"/><stop offset="0.062" stop-color="#767676"/><stop offset="0.125" stop-color="#858585"/><stop offset="0.188" stop-color="#909090"/><stop offset="0.25" stop-color="#989898"/><stop offset="0.312" stop-color="#9e9e9e"/><stop offset="0.375" stop-color="#a4a4a4"/><stop offset="0.438" stop-color="#acacac"/><stop offset="0.5" stop-color="#b6b6b6"/><stop offset="0.562" stop-color="#bdbdbd"/><stop offset="0.625" stop-color="#bcbcbc"/><stop offset="0.688" stop-color="#b1b1b1"/><stop offset="0.75" stop-color="#a4a4a4"/><stop offset="0.812" stop-color="#999999"/><stop offset="0.875" stop-color="#8f8f8f"/><stop offset="0.938" stop-color="#818181"/><stop offset="1.0" stop-color="#5a5a5a"/></linearGradient>
<linearGradient id="gb24" x1="0" y1="0" x2="0" y2="1"><stop offset="0.0" stop-color="#5a5a5a"/><stop offset="0.062" stop-color="#838383"/><stop offset="0.125" stop-color="#a8a8a8"/><stop offset="0.188" stop-color="#ffffff"/><stop offset="0.25" stop-color="#ffffff"/><stop offset="0.312" stop-color="#ffffff"/><stop offset="0.375" stop-color="#ffffff"/><stop offset="0.438" stop-color="#dedede"/><stop offset="0.5" stop-color="#b6b6b6"/><stop offset="0.562" stop-color="#a7a7a7"/><stop offset="0.625" stop-color="#a2a2a2"/><stop offset="0.688" stop-color="#9d9d9d"/><stop offset="0.75" stop-color="#979797"/><stop offset="0.812" stop-color="#909090"/><stop offset="0.875" stop-color="#858585"/><stop offset="0.938" stop-color="#757575"/><stop offset="1.0" stop-color="#535353"/></linearGradient>
<radialGradient id="gm_C_16_m12" cx="50%" cy="50%" r="50%" fx="56%" fy="45%"><stop offset="0.0" stop-color="#262626"/><stop offset="0.1" stop-color="#262626"/><stop offset="0.2" stop-color="#252525"/><stop offset="0.3" stop-color="#242424"/><stop offset="0.4" stop-color="#232323"/><stop offset="0.5" stop-color="#212121"/><stop offset="0.6" stop-color="#1e1e1e"/><stop offset="0.7" stop-color="#1b1b1b"/><stop offset="0.8" stop-color="#171717"/><stop offset="0.9" stop-color="#111111"/><stop offset="1.0" stop-color="#000000"/></radialGradient>
<radialGradient id="gm_H_m10_0" cx="50%" cy="50%" r="50%" fx="46%" fy="50%"><stop offset="0.0" stop-color="#c4c4c4"/><stop offset="0.1" stop-color="#c4c4c4"/><stop offset="0.2" stop-color="#c2c2c2"/><stop offset="0.3" stop-color="#c0c0c0"/><stop offset="0.4" stop-color="#bdbdbd"/><stop offset="0.5" stop-color="#b9b9b9"/><stop offset="0.6" stop-color="#b3b3b3"/><stop offset="0.7" stop-color="#acacac"/><stop offset="0.8" stop-color="#a2a2a2"/><stop offset="0.9" stop-color="#959595"/><stop offset="1.0" stop-color="#707070"/></radialGradient>
<linearGradient id="gb25" x1="0" y1="0" x2="0" y2="1"><stop offset="0.0" stop-color="#595959"/><stop offset="0.062" stop-color="#818181"/><stop offset="0.125" stop-color="#9d9d9d"/><stop offset="0.188" stop-color="#dcdcdc"/><stop offset="0.25" stop-color="#ffffff"/><stop offset="0.312" stop-color="#ffffff"/><stop offset="0.375" stop-color="#ffffff"/><stop offset="0.438" stop-color="#d9d9d9"/><stop offset="0.5" stop-color="#b6b6b6"/><stop offset="0.562" stop-color="#a8a8a8"/><stop offset="0.625" stop-color="#a2a2a2"/><stop offset="0.688" stop-color="#9e9e9e"/><stop offset="0.75" stop-color="#989898"/><stop offset="0.812" stop-color="#909090"/><stop offset="0.875" stop-color="#868686"/><stop offset="0.938" stop-color="#767676"/><stop offset="1.0" stop-color="#535353"/></linearGradient>
<linearGradient id="gb26" x1="0" y1="0" x2="0" y2="1"><stop offset="0.0" stop-color="#545454"/><stop offset="0.062" stop-color="#7c7c7c"/><stop offset="0.125" stop-color="#8b8b8b"/><stop offset="0.188" stop-color="#979797"/><stop offset="0.25" stop-color="#a7a7a7"/><stop offset="0.312" stop-color="#bababa"/><stop offset="0.375" stop-color="#c4c4c4"/><stop offset="0.438" stop-color="#c1c1c1"/><stop offset="0.5" stop-color="#b6b6b6"/><stop offset="0.562" stop-color="#ababab"/><stop offset="0.625" stop-color="#a5a5a5"/><stop offset="0.688" stop-color="#a0a0a0"/><stop offset="0.75" stop-color="#9b9b9b"/><stop offset="0.812" stop-color="#949494"/><stop offset="0.875" stop-color="#8a8a8a"/><stop offset="0.938" stop-color="#7b7b7b"/><stop offset="1.0" stop-color="#535353"/></linearGradient>
<radialGradient id="gm_H_10_10" cx="50%" cy="50%" r="50%" fx="54%" fy="54%"><stop offset="0.0" stop-color="#c4c4c4"/><stop offset="0.1" stop-color="#c4c4c4"/><stop offset="0.2" stop-color="#c2c2c2"/><stop offset="0.3" stop-color="#c0c0c0"/><stop offset="0.4" stop-color="#bdbdbd"/><stop offset="0.5" stop-color="#b9b9b9"/><stop offset="0.6" stop-color="#b3b3b3"/><stop offset="0.7" stop-color="#acacac"/><stop offset="0.8" stop-color="#a2a2a2"/><stop offset="0.9" stop-color="#959595"/><stop offset="1.0" stop-color="#707070"/></radialGradient>
<linearGradient id="gb27" x1="0" y1="0" x2="0" y2="1"><stop offset="0.0" stop-color="#5a5a5a"/><stop offset="0.062" stop-color="#818181"/><stop offset="0.125" stop-color="#8f8f8f"/><stop offset="0.188" stop-color="#9b9b9b"/><stop offset="0.25" stop-color="#a9a9a9"/><stop offset="0.312" stop-color="#b9b9b9"/><stop offset="0.375" stop-color="#c3c3c3"/><stop offset="0.438" stop-color="#c1c1c1"/><stop offset="0.5" stop-color="#b6b6b6"/><stop offset="0.562" stop-color="#ababab"/><stop offset="0.625" stop-color="#a3a3a3"/><stop offset="0.688" stop-color="#9e9e9e"/><stop offset="0.75" stop-color="#989898"/><stop offset="0.812" stop-color="#909090"/><stop offset="0.875" stop-color="#858585"/><stop offset="0.938" stop-color="#757575"/><stop offset="1.0" stop-color="#535353"/></linearGradient>
<radialGradient id="gm_H_26_m15" cx="50%" cy="50%" r="50%" fx="60%" fy="44%"><stop offset="0.0" stop-color="#c4c4c4"/><stop offset="0.1" stop-color="#c4c4c4"/><stop offset="0.2" stop-color="#c2c2c2"/><stop offset="0.3" stop-color="#c0c0c0"/><stop offset="0.4" stop-color="#bdbdbd"/><stop offset="0.5" stop-color="#b9b9b9"/><stop offset="0.6" stop-color="#b3b3b3"/><stop offset="0.7" stop-color="#acacac"/><stop offset="0.8" stop-color="#a2a2a2"/><stop offset="0.9" stop-color="#959595"/><stop offset="1.0" stop-color="#707070"/></radialGradient>
<linearGradient id="gb28" x1="0" y1="0" x2="0" y2="1"><stop offset="0.0" stop-color="#5b5b5b"/><stop offset="0.062" stop-color="#838383"/><stop offset="0.125" stop-color="#959595"/><stop offset="0.188" stop-color="#b4b4b4"/><stop offset="0.25" stop-color="#e0e0e0"/><stop offset="0.312" stop-color="#fbfbfb"/><stop offset="0.375" stop-color="#f0f0f0"/><stop offset="0.438" stop-color="#d1d1d1"/><stop offset="0.5" stop-color="#b6b6b6"/><stop offset="0.562" stop-color="#a8a8a8"/><stop offset="0.625" stop-color="#a2a2a2"/><stop offset="0.688" stop-color="#9d9d9d"/><stop offset="0.75" stop-color="#979797"/><stop offset="0.812" stop-color="#8f8f8f"/><stop offset="0.875" stop-color="#848484"/><stop offset="0.938" stop-color="#747474"/><stop offset="1.0" stop-color="#535353"/></linearGradient>
<radialGradient id="gm_H_35_0" cx="50%" cy="50%" r="50%" fx="64%" fy="50%"><stop offset="0.0" stop-color="#c4c4c4"/><stop offset="0.1" stop-color="#c4c4c4"/><stop offset="0.2" stop-color="#c2c2c2"/><stop offset="0.3" stop-color="#c0c0c0"/><stop offset="0.4" stop-color="#bdbdbd"/><stop offset="0.5" stop-color="#b9b9b9"/><stop offset="0.6" stop-color="#b3b3b3"/><stop offset="0.7" stop-color="#acacac"/><stop offset="0.8" stop-color="#a2a2a2"/><stop offset="0.9" stop-color="#959595"/><stop offset="1.0" stop-color="#707070"/></radialGradient>
<linearGradient id="gb29" x1="0" y1="0" x2="0" y2="1"><stop offset="0.0" stop-color="#535353"/><stop offset="0.062" stop-color="#787878"/><stop offset="0.125" stop-color="#878787"/><stop offset="0.188" stop-color="#929292"/><stop offset="0.25" stop-color="#9a9a9a"/><stop offset="0.312" stop-color="#a1a1a1"/><stop offset="0.375" stop-color="#aaaaaa"/><stop offset="0.438" stop-color="#b3b3b3"/><stop offset="0.5" stop-color="#b6b6b6"/><stop offset="0.562" stop-color="#b2b2b2"/><stop offset="0.625" stop-color="#ababab"/><stop offset="0.688" stop-color="#a3a3a3"/><stop offset="0.75" stop-color="#9d9d9d"/><stop offset="0.812" stop-color="#969696"/><stop offset="0.875" stop-color="#8d8d8d"/><stop offset="0.938" stop-color="#7f7f7f"/><stop offset="1.0" stop-color="#575757"/></linearGradient>
<linearGradient id="gb30" x1="0" y1="0" x2="0" y2="1"><stop offset="0.0" stop-color="#535353"/><stop offset="0.062" stop-color="#7a7a7a"/><stop offset="0.125" stop-color="#898989"/><stop offset="0.188" stop-color="#939393"/><stop offset="0.25" stop-color="#9c9c9c"/><stop offset="0.312" stop-color="#a7a7a7"/><stop offset="0.375" stop-color="#b2b2b2"/><stop offset="0.438" stop-color="#b8b8b8"/><stop offset="0.5" stop-color="#b6b6b6"/><stop offset="0.562" stop-color="#afafaf"/><stop offset="0.625" stop-color="#a7a7a7"/><stop offset="0.688" stop-color="#a2a2a2"/><stop offset="0.75" stop-color="#9c9c9c"/><stop offset="0.812" stop-color="#959595"/><stop offset="0.875" stop-color="#8c8c8c"/><stop offset="0.938" stop-color="#7d7d7d"/><stop offset="1.0" stop-color="#555555"/></linearGradient>
<radialGradient id="gm_C_20_10" cx="50%" cy="50%" r="50%" fx="58%" fy="54%"><stop offset="0.0" stop-color="#262626"/><stop offset="0.1" stop-color="#262626"/><stop offset="0.2" stop-color="#252525"/><stop offset="0.3" stop-color="#242424"/><stop offset="0.4" stop-color="#232323"/><stop offset="0.5" stop-color="#212121"/><stop offset="0.6" stop-color="#1e1e1e"/><stop offset="0.7" stop-color="#1b1b1b"/><stop offset="0.8" stop-color="#171717"/><stop offset="0.9" stop-color="#111111"/><stop offset="1.0" stop-color="#000000"/></radialGradient>
<radialGradient id="gm_O_23_13" cx="50%" cy="50%" r="50%" fx="59%" fy="55%"><stop offset="0.0" stop-color="#b20c2a"/><stop offset="0.1" stop-color="#b20c2a"/><stop offset="0.2" stop-color="#b10c2a"/><stop offset="0.3" stop-color="#af0b29"/><stop offset="0.4" stop-color="#ac0b28"/><stop offset="0.5" stop-color="#a90a28"/><stop offset="0.6" stop-color="#a50a26"/><stop offset="0.7" stop-color="#9f0925"/><stop offset="0.8" stop-color="#980723"/><stop offset="0.9" stop-color="#8d0520"/><stop offset="1.0" stop-color="#700018"/></radialGradient>
<linearGradient id="gb31" x1="0" y1="0" x2="0" y2="1"><stop offset="0.0" stop-color="#4c4c4c"/><stop offset="0.062" stop-color="#707070"/><stop offset="0.125" stop-color="#7d7d7d"/><stop offset="0.188" stop-color="#888888"/><stop offset="0.25" stop-color="#939393"/><stop offset="0.312" stop-color="#9c9c9c"/><stop offset="0.375" stop-color="#9f9f9f"/><stop offset="0.438" stop-color="#9d9d9d"/><stop offset="0.5" stop-color="#989898"/><stop offset="0.562" stop-color="#949494"/><stop offset="0.625" stop-color="#929292"/><stop offset="0.688" stop-color="#8e8e8e"/><stop offset="0.75" stop-color="#898989"/><stop offset="0.812" stop-color="#838383"/><stop offset="0.875" stop-color="#7a7a7a"/><stop offset="0.938" stop-color="#6c6c6c"/><stop offset="1.0" stop-color="#4a4a4a"/></linearGradient>
<linearGradient id="gb32" x1="0" y1="0" x2="0" y2="1"><stop offset="0.0" stop-color="#545454"/><stop offset="0.062" stop-color="#787878"/><stop offset="0.125" stop-color="#898989"/><stop offset="0.188" stop-color="#a0a0a0"/><stop offset="0.25" stop-color="#b9b9b9"/><stop offset="0.312" stop-color="#c2c2c2"/><stop offset="0.375" stop-color="#b8b8b8"/><stop offset="0.438" stop-color="#a9a9a9"/><stop offset="0.5" stop-color="#9e9e9e"/><stop offset="0.562" stop-color="#989898"/><stop offset="0.625" stop-color="#949494"/><stop offset="0.688" stop-color="#909090"/><stop offset="0.75" stop-color="#8b8b8b"/><stop offset="0.812" stop-color="#838383"/><stop offset="0.875" stop-color="#797979"/><stop offset="0.938" stop-color="#6b6b6b"/><stop offset="1.0" stop-color="#4c4c4c"/></linearGradient>
<radialGradient id="gm_H_20_10" cx="50%" cy="50%" r="50%" fx="58%" fy="54%"><stop offset="0.0" stop-color="#c4c4c4"/><stop offset="0.1" stop-color="#c4c4c4"/><stop offset="0.2" stop-color="#c2c2c2"/><stop offset="0.3" stop-color="#c0c0c0"/><stop offset="0.4" stop-color="#bdbdbd"/><stop offset="0.5" stop-color="#b9b9b9"/><stop offset="0.6" stop-color="#b3b3b3"/><stop offset="0.7" stop-color="#acacac"/><stop offset="0.8" stop-color="#a2a2a2"/><stop offset="0.9" stop-color="#959595"/><stop offset="1.0" stop-color="#707070"/></radialGradient>
<polygon points="0,-3.5 122.4,-7.5 122.4,7.5 0,3.5" fill="url(#gb1)" transform="translate(0,9.3) rotate(21.32)"/>
<ellipse cx="6" cy="2" rx="28" ry="28" fill="url(#gm_Od2_0_0)"/><ellipse cx="6.0" cy="2.0" rx="9.8" ry="9.8" fill="url(#gh_Od2)"/>
<rect x="0" y="-6.0" width="101.0" height="12" rx="3.6" fill="url(#gb2)" transform="translate(156.5,101) rotate(28.37)"/>
<ellipse cx="156.5" cy="101" rx="23.5" ry="23.5" fill="url(#gm_O_m10_0)"/><ellipse cx="154.2" cy="101.0" rx="8.9" ry="8.9" fill="url(#gh_O)"/>
<rect x="0" y="-7.0" width="50.2" height="14" rx="4.2" fill="url(#gb3)" transform="translate(114,60) rotate(42.58)"/>
<ellipse cx="114" cy="60" rx="41" ry="41" fill="url(#gm_Pu_m22_m12)"/><ellipse cx="105.0" cy="55.1" rx="13.9" ry="13.9" fill="url(#gh_Pu)"/>
<rect x="0" y="-8.0" width="77.8" height="16" rx="4.8" fill="url(#gb4)" transform="translate(137,35) rotate(-47.08)"/>
<rect x="0" y="-7.5" width="71.9" height="15" rx="4.5" fill="url(#gb5)" transform="translate(107.5,87) rotate(103.26)"/>
<ellipse cx="91" cy="157" rx="32" ry="32" fill="url(#gm_O_m22_0)"/><ellipse cx="84.0" cy="157.0" rx="12.2" ry="12.2" fill="url(#gh_O)"/>
<rect x="0" y="-7.0" width="92.9" height="14" rx="4.2" fill="url(#gb6)" transform="translate(245.4,149) rotate(-38.88)"/>
<rect x="0" y="-6.0" width="76.1" height="12" rx="3.6" fill="url(#gb7)" transform="translate(262,172) rotate(31.35)"/>
<ellipse cx="262" cy="172" rx="18.5" ry="18.5" fill="url(#gm_Od_0_0)"/><ellipse cx="262.0" cy="172.0" rx="6.5" ry="6.5" fill="url(#gh_Od)"/>
<ellipse cx="245.4" cy="149" rx="33" ry="33" fill="url(#gm_P_0_0)"/><ellipse cx="245.4" cy="149.0" rx="14.8" ry="14.8" fill="url(#gh_P)"/>
<rect x="0" y="-6.5" width="62.0" height="13" rx="3.9" fill="url(#gb8)" transform="translate(244,176) rotate(91.85)"/>
<ellipse cx="242" cy="238" rx="25" ry="25" fill="url(#gm_O_0_17)"/><ellipse cx="242.0" cy="242.2" rx="9.5" ry="9.5" fill="url(#gh_O)"/>
<rect x="0" y="-2.5" width="30.0" height="5" rx="1.5" fill="url(#gb9)" transform="translate(317.7,90.7) rotate(111.52)"/>
<ellipse cx="306.7" cy="118.6" rx="5.5" ry="5.5" fill="url(#gm_Hd_0_0)"/><ellipse cx="306.7" cy="118.6" rx="1.9" ry="1.9" fill="url(#gh_Hd)"/>
<ellipse cx="317.7" cy="90.7" rx="24" ry="24" fill="url(#gm_O_15_m5)"/><ellipse cx="321.3" cy="89.5" rx="9.1" ry="9.1" fill="url(#gh_O)"/>
<rect x="0" y="-4.0" width="48.1" height="8" rx="2.4" fill="url(#gb10)" transform="translate(371,43) rotate(-63.43)"/>
<ellipse cx="344" cy="66.5" rx="12.2" ry="12.2" fill="url(#gm_N_10_m10)"/><ellipse cx="345.2" cy="65.3" rx="3.9" ry="3.9" fill="url(#gh_N)"/>
<rect x="0" y="-3.5" width="27.7" height="7" rx="2.1" fill="url(#gb11)" transform="translate(350,61) rotate(-40.60)"/>
<ellipse cx="371" cy="43" rx="12" ry="12" fill="url(#gm_C_15_0)"/><ellipse cx="372.8" cy="43.0" rx="5.0" ry="5.0" fill="url(#gh_C)"/>
<rect x="0" y="-3.75" width="50.2" height="7.5" rx="2.2" fill="url(#gb12)" transform="translate(380,60.6) rotate(118.05)"/>
<ellipse cx="380" cy="60.6" rx="12.2" ry="12.2" fill="url(#gm_C_15_0)"/><ellipse cx="381.8" cy="60.6" rx="5.1" ry="5.1" fill="url(#gh_C)"/>
<rect x="0" y="-4.0" width="29.2" height="8" rx="2.4" fill="url(#gb13)" transform="translate(386,58) rotate(-30.21)"/>
<ellipse cx="411.25" cy="43.3" rx="15" ry="15" fill="url(#gm_N_25_m13)"/><ellipse cx="415.0" cy="41.3" rx="4.8" ry="4.8" fill="url(#gh_N)"/>
<rect x="0" y="-4.0" width="54.6" height="8" rx="2.4" fill="url(#gb14)" transform="translate(408,79.2) rotate(131.81)"/>
<rect x="0" y="-3.5" width="28.8" height="7" rx="2.1" fill="url(#gb15)" transform="translate(410.5,50.5) rotate(94.98)"/>
<ellipse cx="408" cy="79.2" rx="14" ry="14" fill="url(#gm_C_15_0)"/><ellipse cx="410.1" cy="79.2" rx="5.9" ry="5.9" fill="url(#gh_C)"/>
<rect x="0" y="-4.0" width="25.3" height="8" rx="2.4" fill="url(#gb16)" transform="translate(408,79.2) rotate(-5.89)"/>
<ellipse cx="433.2" cy="76.6" rx="7" ry="7" fill="url(#gm_H_30_m10)"/><ellipse cx="435.3" cy="75.9" rx="2.5" ry="2.5" fill="url(#gh_H)"/>
<ellipse cx="328.7" cy="125" rx="12.5" ry="12.5" fill="url(#gm_N_m25_m25)"/><ellipse cx="325.6" cy="121.9" rx="4.0" ry="4.0" fill="url(#gh_N)"/>
<rect x="0" y="-4.0" width="27.6" height="8" rx="2.4" fill="url(#gb17)" transform="translate(356.4,104.9) rotate(144.29)"/>
<rect x="0" y="-4.0" width="21.4" height="8" rx="2.4" fill="url(#gb18)" transform="translate(356.4,104.9) rotate(44.62)"/>
<ellipse cx="356.4" cy="104.9" rx="12.4" ry="12.4" fill="url(#gm_C_15_0)"/><ellipse cx="358.3" cy="104.9" rx="5.2" ry="5.2" fill="url(#gh_C)"/>
<ellipse cx="371.6" cy="119.9" rx="15" ry="15" fill="url(#gm_N_15_m10)"/><ellipse cx="373.9" cy="118.4" rx="4.8" ry="4.8" fill="url(#gh_N)"/>
<rect x="0" y="-4.0" width="33.8" height="8" rx="2.4" fill="url(#gb19)" transform="translate(368,130) rotate(108.97)"/>
<rect x="0" y="-4.0" width="49.0" height="8" rx="2.4" fill="url(#gb20)" transform="translate(327,211.6) rotate(-57.15)"/>
<ellipse cx="353.6" cy="170.4" rx="13.5" ry="13.5" fill="url(#gm_C_15_0)"/><ellipse cx="355.6" cy="170.4" rx="5.7" ry="5.7" fill="url(#gh_C)"/>
<rect x="0" y="-3.5" width="13.1" height="7" rx="2.1" fill="url(#gb21)" transform="translate(353.6,170.4) rotate(-164.90)"/>
<ellipse cx="325" cy="160.5" rx="16" ry="16" fill="url(#gm_O_0_0)"/><ellipse cx="325.0" cy="160.5" rx="6.1" ry="6.1" fill="url(#gh_O)"/>
<rect x="0" y="-4.5" width="39.7" height="9" rx="2.7" fill="url(#gb22)" transform="translate(325,172) rotate(87.11)"/>
<rect x="0" y="-4.0" width="52.9" height="8" rx="2.4" fill="url(#gb23)" transform="translate(327,211.6) rotate(140.83)"/>
<rect x="0" y="-4.25" width="72.2" height="8.5" rx="2.5" fill="url(#gb24)" transform="translate(327,211.6) rotate(31.75)"/>
<ellipse cx="327" cy="211.6" rx="18.5" ry="21" fill="url(#gm_C_16_m12)"/><ellipse cx="330.0" cy="209.1" rx="7.8" ry="8.8" fill="url(#gh_C)"/>
<rect x="0" y="-5.75" width="46.3" height="11.5" rx="3.4" fill="url(#gb13)" transform="translate(336,197) rotate(-30.22)"/>
<ellipse cx="376" cy="173.7" rx="9.5" ry="9.5" fill="url(#gm_H_m10_0)"/><ellipse cx="375.1" cy="173.7" rx="3.4" ry="3.4" fill="url(#gh_H)"/>
<rect x="0" y="-4.0" width="47.6" height="8" rx="2.4" fill="url(#gb25)" transform="translate(376,173.7) rotate(47.81)"/>
<rect x="0" y="-5.0" width="38.8" height="10" rx="3.0" fill="url(#gb26)" transform="translate(328.5,223) rotate(86.60)"/>
<ellipse cx="286" cy="245" rx="7" ry="7" fill="url(#gm_H_10_10)"/><ellipse cx="286.7" cy="245.7" rx="2.5" ry="2.5" fill="url(#gh_H)"/>
<ellipse cx="330.8" cy="261.7" rx="8.8" ry="8.8" fill="url(#gm_H_10_10)"/><ellipse cx="331.7" cy="262.6" rx="3.2" ry="3.2" fill="url(#gh_H)"/>
<rect x="0" y="-4.0" width="48.2" height="8" rx="2.4" fill="url(#gb27)" transform="translate(408,209) rotate(-33.06)"/>
<ellipse cx="448.4" cy="182.7" rx="7.3" ry="7.3" fill="url(#gm_H_26_m15)"/><ellipse cx="450.3" cy="181.6" rx="2.6" ry="2.6" fill="url(#gh_H)"/>
<rect x="0" y="-3.75" width="37.4" height="7.5" rx="2.2" fill="url(#gb28)" transform="translate(418.5,239) rotate(-8.46)"/>
<ellipse cx="455.5" cy="233.5" rx="5.8" ry="5.8" fill="url(#gm_H_35_0)"/><ellipse cx="457.5" cy="233.5" rx="2.1" ry="2.1" fill="url(#gh_H)"/>
<rect x="0" y="-5.0" width="45.1" height="10" rx="3.0" fill="url(#gb29)" transform="translate(408,209) rotate(115.77)"/>
<rect x="0" y="-6.0" width="51.9" height="12" rx="3.6" fill="url(#gb30)" transform="translate(388.4,249.6) rotate(103.82)"/>
<ellipse cx="408" cy="209" rx="15" ry="13.5" fill="url(#gm_C_20_10)"/><ellipse cx="411.0" cy="210.3" rx="6.3" ry="5.7" fill="url(#gh_C)"/>
<ellipse cx="418.5" cy="239" rx="15" ry="15" fill="url(#gm_O_23_13)"/><ellipse cx="421.9" cy="240.9" rx="5.7" ry="5.7" fill="url(#gh_O)"/>
<rect x="0" y="-3.75" width="15.5" height="7.5" rx="2.2" fill="url(#gb31)" transform="translate(413,221) rotate(75.07)"/>
<ellipse cx="388.4" cy="249.6" rx="16" ry="16" fill="url(#gm_C_15_0)"/><ellipse cx="390.8" cy="249.6" rx="6.7" ry="6.7" fill="url(#gh_C)"/>
<rect x="0" y="-5.25" width="35.6" height="10.5" rx="3.1" fill="url(#gb32)" transform="translate(394,251.5) rotate(5.15)"/>
<ellipse cx="429.5" cy="254.7" rx="8" ry="8" fill="url(#gm_H_20_10)"/><ellipse cx="431.1" cy="255.5" rx="2.9" ry="2.9" fill="url(#gh_H)"/>
</g>

</svg>
</div>
<div id="vdiv"></div>
<div id="rpanel"></div>
<div id="rgroup" style="position:absolute;left:499px;top:23px;width:138px;height:258px;border:1px solid #d8d8d8;box-shadow:inset 1px 1px 0 #ececec"></div>
<div style="position:absolute;left:492.5px;top:147.5px;width:0;height:0;border-left:3.5px solid #444;border-top:2.5px solid transparent;border-bottom:2.5px solid transparent"></div>
<div style="position:absolute;left:316px;top:286px;width:0;height:0;border-top:4px solid #555;border-left:3px solid transparent;border-right:3px solid transparent"></div>

<div id="hdiv"></div>

<div id="tabpanel"></div>
<div id="ogroup" style="position:absolute;left:130px;top:318px;width:501px;height:133px;border:1px solid #b4b4b4;box-shadow:1px 1px 0 #f8f8f8 inset, 1px 1px 0 #f8f8f8"></div>


<div id="tabs"></div>
<div style="position:absolute;left:171px;top:295px;width:63px;height:13px;background:linear-gradient(#dcdcdc,#d2d2d2)"></div>
<div class="tsep" style="left:234px;top:295px"></div>
<div class="tsep" style="left:284px;top:295px"></div>
<div class="tsep" style="left:351px;top:295px"></div>
<div class="tsep" style="left:414px;top:295px"></div>
<div class="tsep" style="left:459px;top:295px"></div>

<div class="a" style="left:297.65px;top:3.88px;font-size:9.5px;line-height:9.5px;letter-spacing:0.312px;color:#505050;">MollyCule</div>
<div class="a" style="left:505.05px;top:19.85px;font-size:10px;line-height:10px;letter-spacing:0.167px;color:#1e1e1e;background:#fff;padding:0 1px;margin-left:-1px">Help</div>
<div class="a" style="left:503.75px;top:34.78px;font-size:9px;line-height:9px;letter-spacing:0.47px;color:#1e1e1e;">You have selected an atom.</div>
<div class="a" style="left:504.0px;top:57.42px;font-size:9px;line-height:9px;letter-spacing:0.5px;color:#1e1e1e;">Atomic Symbol P</div>
<div class="a" style="left:503.25px;top:79.85px;font-size:9px;line-height:9px;letter-spacing:0.458px;color:#1e1e1e;">English Name:</div>
<div class="a" style="left:570.25px;top:79.85px;font-size:9px;line-height:9px;letter-spacing:-0.389px;color:#1e1e1e;">PHOSPHORUS</div>
<div class="a" style="left:503.75px;top:102.62px;font-size:9px;line-height:9px;letter-spacing:0.469px;color:#1e1e1e;">X Position: 2.329</div>
<div class="a" style="left:503.75px;top:113.88px;font-size:9px;line-height:9px;letter-spacing:0.5px;color:#1e1e1e;">Y Position: 0.23900004</div>
<div class="a" style="left:503.75px;top:125.18px;font-size:9px;line-height:9px;letter-spacing:0.529px;color:#1e1e1e;">Z Position: –2.341</div>
<div class="a" style="left:145.05px;top:297.0px;font-size:8.5px;line-height:8.5px;letter-spacing:0.175px;color:#000;-webkit-text-stroke:0">Files</div>
<div class="a" style="left:179.05px;top:297.0px;font-size:8.5px;line-height:8.5px;letter-spacing:0.42px;color:#000;-webkit-text-stroke:0">Loader Info</div>
<div class="a" style="left:241.75px;top:297.0px;font-size:8.5px;line-height:8.5px;letter-spacing:0.271px;color:#000;-webkit-text-stroke:0">Universe</div>
<div class="a" style="left:293.25px;top:297.0px;font-size:8.5px;line-height:8.5px;letter-spacing:0.25px;color:#000;-webkit-text-stroke:0">ChemColour</div>
<div class="a" style="left:359.25px;top:297.0px;font-size:8.5px;line-height:8.5px;letter-spacing:0.375px;color:#000;-webkit-text-stroke:0">Concretizer</div>
<div class="a" style="left:422.75px;top:297.0px;font-size:8.5px;line-height:8.5px;letter-spacing:0.42px;color:#000;-webkit-text-stroke:0">Viewer</div>
<div class="a" style="left:467.0px;top:297.0px;font-size:8.5px;line-height:8.5px;letter-spacing:0.5px;color:#000;-webkit-text-stroke:0">Output</div>
<div class="a" style="left:135.0px;top:313.7px;font-size:8.5px;line-height:8.5px;letter-spacing:-0.333px;color:#1e1e1e;background:#e8e8e8;padding:0 1px;margin-left:-1px">Options</div>
<div class="a" style="left:38.25px;top:330.62px;font-size:8px;line-height:8px;letter-spacing:-0.058px;color:#1e1e1e;">Current Loader</div>
<div class="a" style="left:56.25px;top:358.75px;font-size:8.5px;line-height:8.5px;letter-spacing:0.0px;color:#1e1e1e;">PDB</div>
<div class="a" style="left:132.75px;top:327.92px;font-size:9px;line-height:9px;letter-spacing:0.139px;color:#1e1e1e;">PDB Loader</div>
<div class="a" style="left:132.65px;top:353.98px;font-size:9px;line-height:9px;letter-spacing:0.529px;color:#1e1e1e;">Molecule Name</div>
<div class="a" style="left:223.0px;top:353.98px;font-size:9px;line-height:9px;letter-spacing:0.566px;color:#1e1e1e;">Adenine Triphosphate</div>
<div class="a" style="left:132.65px;top:372.67px;font-size:9px;line-height:9px;letter-spacing:0.721px;color:#1e1e1e;">Number of Atoms</div>
<div class="a" style="left:222.75px;top:373.3px;font-size:9px;line-height:9px;letter-spacing:0.5px;color:#1e1e1e;">43</div>
<div class="a" style="left:132.65px;top:383.28px;font-size:9px;line-height:9px;letter-spacing:0.579px;color:#1e1e1e;">Number of Bonds</div>
<div class="a" style="left:222.75px;top:383.9px;font-size:9px;line-height:9px;letter-spacing:0.5px;color:#1e1e1e;">45</div>
</body></html>
